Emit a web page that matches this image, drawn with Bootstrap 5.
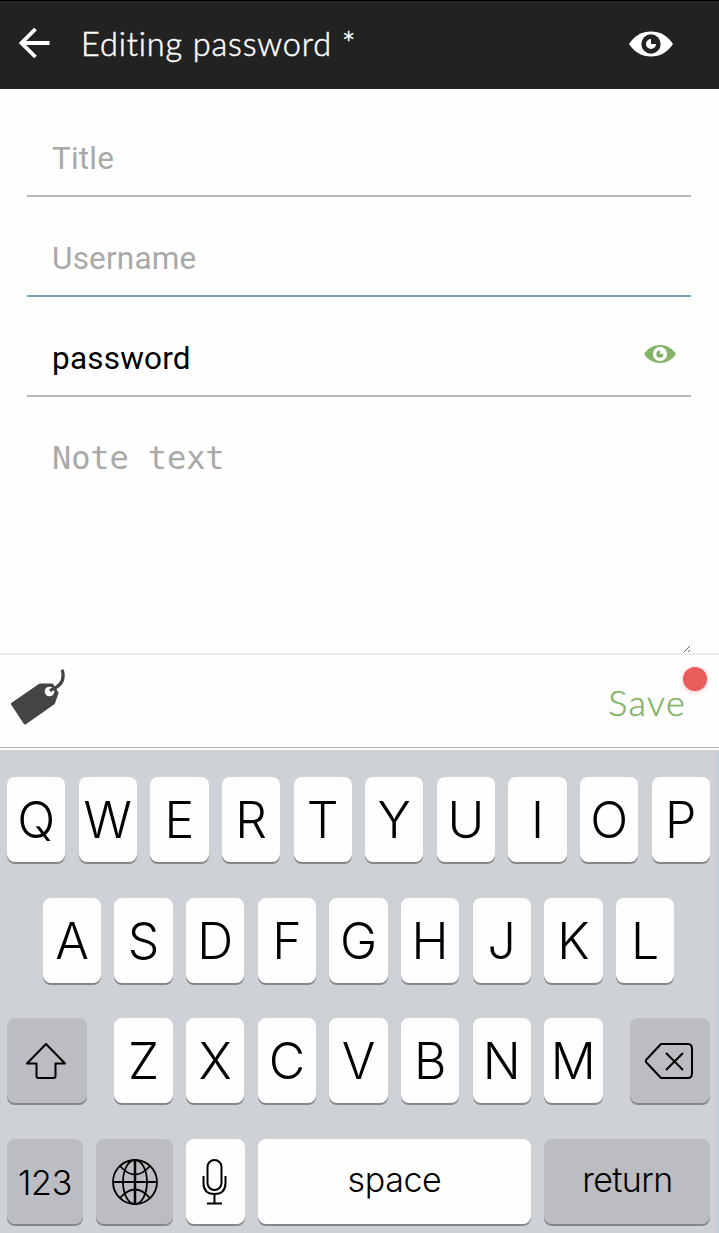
<!DOCTYPE html>
<html lang="en">
<head>
<meta charset="utf-8">
<meta name="viewport" content="width=device-width, initial-scale=1">
<title>Editing password</title>
<link href="https://cdn.jsdelivr.net/npm/bootstrap@5.3.0/dist/css/bootstrap.min.css" rel="stylesheet">
<style>
body { background: #fefefe; font-family: Roboto, sans-serif; color: #000; overflow: hidden; }
svg { display: block; flex: none; }
.app { width: 719px; height: 1233px; }
.topbar { height: 89px; background: #222; border-top: 1px solid #000; padding: 0 46px 3px 19px; }
.topbar-title { font: 300 32.5px/40px Lato, sans-serif; color: #fff; -webkit-text-stroke: .5px #fff; margin-left: 31px; letter-spacing: .85px; white-space: pre; }
.form-area { height: 564px; padding: 8px 28px 0 27px; }
.field { height: 100px; padding: 22px 15px 0 25px; border-bottom: 2px solid #b5b5b5; font-size: 31.5px; line-height: 80px; letter-spacing: .2px; color: #a9a9a9; }
.field-active { border-color: #7ba0b2; }
.field-filled { color: #000; }
.reveal { margin-top: 18px; }
.note { height: 256px; padding: 39px 0 0 25px; color: #a9a9a9; }
.note-text { font: 32px/44px "DejaVu Sans Mono", monospace; letter-spacing: -.1px; }
.actions { height: 95px; border-top: 2px solid #ebebeb; border-bottom: 1px solid #adb0b4; padding: 0 33px 0 11px; }
.tag-icon { margin-top: -6px; }
.save { font: 300 36px/44px Lato, sans-serif; color: #82b366; -webkit-text-stroke: .4px #82b366; letter-spacing: 1.3px; margin-top: 2px; }
.dot { position: absolute; width: 24px; height: 24px; right: -21px; top: -13px; background: #e95c5c; box-shadow: 0 1px 4px #e95c5c66; }
.keyboard { height: 483px; margin-top: 2px; padding: 27px 7px 0; background: #ced1d5; border-right: 2px solid #bfd0dc; row-gap: 35.7px; }
.key-row { gap: 13.33px; height: 85px; }
.key { width: 58.3px; height: 85px; flex: none; border-radius: 8px; background: #fefefe; box-shadow: 0 2px 0 #85868a; font: 300 50px/86px Inter, "Liberation Sans", sans-serif; color: #000; }
.key-gray { background: #bcbdc2; }
.key-wide { width: 80px; }
.key-num { width: 76px; font-size: 34px; line-height: 87px; letter-spacing: -.3px; }
.key-globe { width: 76.6px; }
.key-space { width: 273.2px; font-size: 34px; letter-spacing: -.4px; }
.key-return { width: 166px; font-size: 34px; letter-spacing: -.6px; }
.key-space span, .key-return span { position: relative; top: -2px; }
</style>
</head>
<body>
<div class="app d-flex flex-column">
  <header class="topbar d-flex align-items-center">
    <svg width="31" height="32" viewBox="0 0 31 32" fill="none" stroke="#fff" stroke-width="3.8"><path d="M30.500 15H3M16.500 1 2.500 15l14 14"/></svg>
    <div class="topbar-title">Editing password *</div>
    <svg class="ms-auto" width="44" height="26" viewBox="0 0 44 26"><path fill="#fff" d="M0 13C5 5 13 .5 22 .5S39 5 44 13C39 21 31 25.500 22 25.500S5 21 0 13Z"/><circle cx="22" cy="13" r="9.700" fill="#222"/><path fill="#fff" d="M22 8v5h5a5 5 0 1 1-5-5Z"/></svg>
  </header>

  <main class="form-area">
    <div class="field">Title</div>
    <div class="field field-active">Username</div>
    <div class="field field-filled d-flex justify-content-between">password
      <svg class="reveal" width="32" height="34" viewBox="0 -8 32 34"><path fill="#82b366" d="M0 9C4 3 10 0 16 0s12 3 16 9c-4 6-10 9-16 9S4 15 0 9Z"/><circle cx="16" cy="9" r="7.200" fill="#fefefe"/><path fill="#82b366" d="M16 5.500V9h3.500A3.600 3.600 0 1 1 16 5.500Z"/></svg>
    </div>
    <div class="note d-flex justify-content-between">
      <span class="note-text">Note text</span>
      <svg class="align-self-end" width="9" height="9" viewBox="0 0 9 9" stroke="#666"><path d="m2 8 6-6M6 8l2-2"/></svg>
    </div>
  </main>

  <div class="actions d-flex align-items-center justify-content-between">
    <svg class="tag-icon" width="56" height="58" viewBox="0 0 56 58"><path fill="#444" stroke="#444" stroke-width="3" stroke-linejoin="round" d="M1.500 35 29 16h12l5 8-3.500 10L14 54Z"/><circle cx="38.500" cy="22.500" r="4.800" fill="#fefefe"/><path fill="none" stroke="#444" stroke-width="3.200" stroke-linecap="round" d="M40 21c8-3 14-9 11.500-19"/></svg>
    <div class="save position-relative">Save<span class="dot rounded-circle"></span></div>
  </div>

  <div class="keyboard d-flex flex-column">
    <div class="key-row d-flex">
      <div class="key text-center">Q</div><div class="key text-center">W</div><div class="key text-center">E</div><div class="key text-center">R</div><div class="key text-center">T</div><div class="key text-center">Y</div><div class="key text-center">U</div><div class="key text-center">I</div><div class="key text-center">O</div><div class="key text-center">P</div>
    </div>
    <div class="key-row d-flex justify-content-center">
      <div class="key text-center">A</div><div class="key text-center">S</div><div class="key text-center">D</div><div class="key text-center">F</div><div class="key text-center">G</div><div class="key text-center">H</div><div class="key text-center">J</div><div class="key text-center">K</div><div class="key text-center">L</div>
    </div>
    <div class="key-row d-flex">
      <div class="key key-gray key-wide d-flex align-items-center justify-content-center me-auto"><svg width="42" height="38" viewBox="0 0 42 38" fill="none" stroke="#000" stroke-width="2" stroke-linejoin="round"><path d="M20 2 1 21.500H10.500V34q0 2 2 2h15q2 0 2-2V21.500H39Z"/></svg></div>
      <div class="key text-center">Z</div><div class="key text-center">X</div><div class="key text-center">C</div><div class="key text-center">V</div><div class="key text-center">B</div><div class="key text-center">N</div><div class="key text-center">M</div>
      <div class="key key-gray key-wide d-flex align-items-center justify-content-center ms-auto"><svg width="50" height="38" viewBox="1 0 50 38" fill="none" stroke="#000" stroke-width="2" stroke-linejoin="round"><path d="M17 2h27q4 0 4 5v24q0 5-4 5H17L2 20q-1-1 0-2ZM22 11l17 17M39 11 22 28"/></svg></div>
    </div>
    <div class="key-row d-flex">
      <div class="key key-gray key-num text-center">123</div>
      <div class="key key-gray key-globe d-flex align-items-center justify-content-center"><svg width="46" height="46" viewBox="0 0 46 46" fill="none" stroke="#000" stroke-width="1.800"><circle cx="23" cy="23" r="22"/><ellipse cx="23" cy="23" rx="12" ry="22"/><path d="M1 23h44M8 7q15 17 30 0M8 39q15-17 30 0"/><path stroke-width="2.500" d="M23 1v44"/></svg></div>
      <div class="key d-flex align-items-center justify-content-center"><svg width="26" height="46" viewBox="0 0 26 46" fill="none" stroke="#000" stroke-width="2"><rect x="5.500" y="1" width="14" height="30" rx="7"/><path d="M1.500 17v7c0 7 4 11 11 11s11-4 11-11v-7M12.500 35v9M5 44.500h15"/></svg></div>
      <div class="key key-space text-center"><span>space</span></div>
      <div class="key key-gray key-return text-center"><span>return</span></div>
    </div>
  </div>
</div>
<script src="https://cdn.jsdelivr.net/npm/bootstrap@5.3.0/dist/js/bootstrap.bundle.min.js"></script>
</body>
</html>
